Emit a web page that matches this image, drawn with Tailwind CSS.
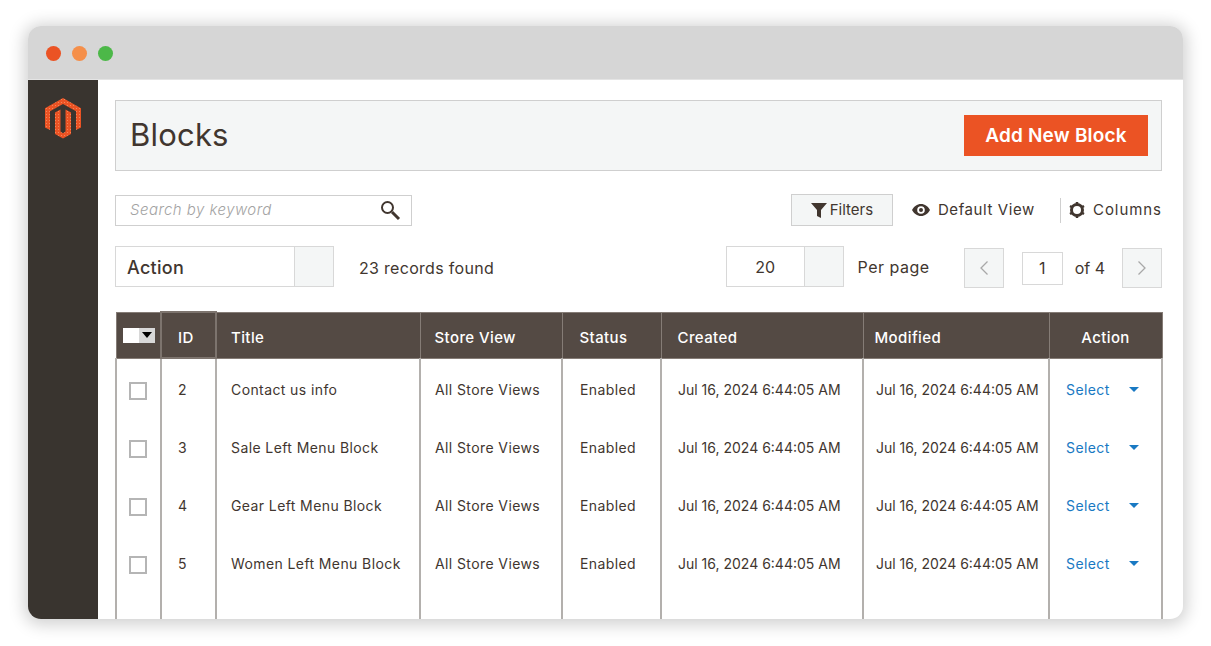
<!DOCTYPE html>
<html lang="en">
<head>
    <meta charset="UTF-8">
    <title>Blocks</title>
    <script src="https://cdn.jsdelivr.net/npm/@tailwindcss/browser@4"></script>
</head>
<body class="bg-white font-['Inter','Liberation_Sans',sans-serif] text-[#41362f]">
    <div class="w-[1211px] h-[646px] overflow-hidden pt-[26px] pl-[28px]">
        <div class="w-[1155px] h-[593px] rounded-[13px] overflow-hidden flex flex-col bg-white shadow-[0_2px_16px_4px_rgba(0,0,0,0.18)]">
            <div class="h-[54px] shrink-0 bg-[#d6d6d6] border-b border-[#e4e4e4] flex items-center gap-[11px] pl-[18px] pt-[1px]">
                <span class="w-[15px] h-[15px] rounded-full bg-[#eb5324]"></span>
                <span class="w-[15px] h-[15px] rounded-full bg-[#f58f4a]"></span>
                <span class="w-[15px] h-[15px] rounded-full bg-[#4cb848]"></span>
            </div>
            <div class="flex flex-1 min-h-0">
                <div class="w-[70px] shrink-0 bg-[#39342f] flex justify-center pt-[18px]">
                    <svg width="36" height="41" viewBox="0 0 36 41">
                        <defs><pattern id="dots" width="3" height="3" patternUnits="userSpaceOnUse"><rect width="3" height="3" fill="#eb5324"/><rect x="1" y="1" width="1" height="1" fill="#f2865a"/></pattern></defs>
                        <path fill="url(#dots)" d="M18 0 36 10.300V29.500l-5 2.500V13.300L18 6 5 13.300V32L0 29.500V10.300Z"/>
                        <path fill="url(#dots)" d="M10 14.500 15.500 11.500V33.500l2.500 1.800 2.500-1.800V11.500L26 14.500V36L18 40.500 10 36Z"/>
                    </svg>
                </div>
                <div class="flex-1 min-w-0 pl-[17px] pr-[21px] pt-[20px]">
                    <div class="h-[71px] bg-[#f4f6f6] border border-[#cfcfcf] flex items-center justify-between pl-[14px] pr-[13px]">
                        <h1 class="text-[31px] tracking-[0.2px] font-normal text-[#41362f]">Blocks</h1>
                        <button class="w-[184px] h-[41px] pt-[1px] bg-[#eb5324] text-white text-[19px] tracking-[0.2px] font-semibold">Add New Block</button>
                    </div>

                    <div class="flex items-center justify-between mt-[23px] h-[32px]">
                        <div class="w-[297px] h-[31px] border border-[#cfcfcf] flex items-center justify-between pl-[14px] pr-[10px]">
                            <span class="pt-[1px] text-[15px] tracking-[0.45px] italic font-light text-[#a3a3a3]">Search by keyword</span>
                            <svg width="22" height="22" viewBox="0 0 22 22" fill="none" stroke="#41362f"><circle cx="8.500" cy="8.500" r="5.500" stroke-width="2"/><path d="m13 13 7 7" stroke-width="3"/></svg>
                        </div>
                        <div class="flex items-center">
                            <button class="w-[102px] h-[32px] bg-[#f4f6f6] border border-[#cfcfcf] flex items-center justify-center gap-[3px] text-[15px]">
                                <svg width="16" height="16" viewBox="0 0 16 16"><path fill="#41362f" d="M0 1h16L10 8v8l-4-2V8Z"/></svg>
                                Filters
                            </button>
                            <svg class="ml-[19px]" width="18" height="12" viewBox="0 0 18 12"><path fill="#41362f" fill-rule="evenodd" d="M9 0c4 0 7 2.500 9 6-2 3.500-5 6-9 6S2 9.500 0 6c2-3.500 5-6 9-6Zm0 2.200a3.800 3.800 0 1 0 0 7.600 3.800 3.800 0 0 0 0-7.600Z"/><circle cx="9" cy="6" r="2" fill="#41362f"/></svg>
                            <span class="ml-[8px] text-[15px] tracking-[0.6px]">Default View</span>
                            <span class="ml-[25px] w-px h-[25px] bg-[#cfcfcf]"></span>
                            <svg class="ml-[8px]" width="16" height="16" viewBox="0 0 16 16" fill="none"><circle cx="8" cy="8" r="5.500" stroke="#41362f" stroke-width="3"/><path stroke="#41362f" stroke-width="2.500" d="M8 0v2M8 14v2M1 4l1.800 1M13.200 11 15 12M1 12l1.800-1M13.200 5 15 4"/></svg>
                            <span class="ml-[8px] pt-[1px] text-[15px] tracking-[0.95px]">Columns</span>
                        </div>
                    </div>

                    <div class="flex items-center mt-[20px] h-[41px]">
                        <div class="w-[219px] h-[41px] border border-[#d8d8d8] flex">
                            <span class="flex-1 flex items-center pl-[11px] pt-[2px] text-[18px] tracking-[0.3px] font-medium">Action</span>
                            <span class="w-[39px] bg-[#f4f6f6] border-l border-[#d8d8d8]"></span>
                        </div>
                        <span class="ml-[25px] mt-[2px] text-[16px] tracking-[0.3px]">23 records found</span>
                        <div class="ml-auto w-[118px] h-[41px] border border-[#d8d8d8] flex">
                            <span class="flex-1 flex items-center justify-center text-[16px]">20</span>
                            <span class="w-[39px] bg-[#f4f6f6] border-l border-[#d8d8d8]"></span>
                        </div>
                        <span class="ml-[14px] text-[16px] tracking-[0.5px]">Per page</span>
                        <button class="ml-[34px] mt-[3px] w-[40px] h-[40px] bg-[#f4f6f6] border border-[#d8d8d8] flex items-center justify-center">
                            <svg width="10" height="16" viewBox="0 0 10 16" fill="none" stroke="#a8a8a8" stroke-width="1.300"><path d="M8.500 1.500 2 8l6.500 6.500"/></svg>
                        </button>
                        <span class="ml-[18px] mt-[3px] w-[41px] h-[33px] border border-[#d8d8d8] flex items-center justify-center text-[16px]">1</span>
                        <span class="ml-[12px] mt-[3px] text-[16px]">of 4</span>
                        <button class="ml-[17px] mt-[3px] w-[40px] h-[40px] bg-[#f4f6f6] border border-[#d8d8d8] flex items-center justify-center">
                            <svg width="10" height="16" viewBox="0 0 10 16" fill="none" stroke="#a8a8a8" stroke-width="1.300"><path d="M1.500 1.500 8 8l-6.500 6.500"/></svg>
                        </button>
                    </div>

                    <table class="mt-[24px] w-[1046px] table-fixed border-collapse text-[14px] tracking-[0.4px]">
                        <colgroup>
                            <col class="w-[45px]"><col class="w-[55px]"><col class="w-[204px]"><col class="w-[142px]"><col class="w-[99px]"><col class="w-[202px]"><col class="w-[186px]"><col class="w-[113px]">
                        </colgroup>
                        <thead>
                            <tr class="h-[46px] bg-[#544a44] text-white text-[15px] text-left">
                                <th class="border border-[#857c76] font-medium pl-[6px]">
                                    <span class="flex w-[32px] h-[15px]"><span class="w-[16px] bg-white"></span><span class="w-[16px] bg-[#d8d8d8] flex items-center justify-center"><span class="border-x-[5px] border-t-[6px] border-x-transparent border-t-black"></span></span></span>
                                </th>
                                <th class="border-2 border-[#7d746e] font-medium pl-[16px] pt-[6px]">ID</th>
                                <th class="border border-[#857c76] font-medium pl-[14px] pt-[6px]">Title</th>
                                <th class="border border-[#857c76] font-medium pl-[14px] pt-[6px]">Store View</th>
                                <th class="border border-[#857c76] font-medium pl-[17px] pt-[6px]">Status</th>
                                <th class="border border-[#857c76] font-medium pl-[16px] pt-[6px]">Created</th>
                                <th class="border border-[#857c76] font-medium pl-[11px] pt-[6px]">Modified</th>
                                <th class="border border-[#857c76] font-medium text-center pt-[6px]">Action</th>
                            </tr>
                        </thead>
                        <tbody class="[&_td]:pt-[4px]">
                            <tr class="h-[58px]">
                                <td class="border-x-2 border-[#b3b0ad] pl-[12px]"><span class="block mt-[4px] w-[18px] h-[18px] border-2 border-[#b5b5b5]"></span></td>
                                <td class="border-x-2 border-[#b3b0ad] pl-[16px]">2</td>
                                <td class="border-x-2 border-[#b3b0ad] pl-[14px]">Contact us info</td>
                                <td class="border-x-2 border-[#b3b0ad] pl-[14px]">All Store Views</td>
                                <td class="border-x-2 border-[#b3b0ad] pl-[17px]">Enabled</td>
                                <td class="border-x-2 border-[#b3b0ad] pl-[16px] tracking-normal">Jul 16, 2024 6:44:05 AM</td>
                                <td class="border-x-2 border-[#b3b0ad] pl-[12px] tracking-normal">Jul 16, 2024 6:44:05 AM</td>
                                <td class="border-x-2 border-[#b3b0ad] pl-[16px]"><span class="flex items-center justify-between w-[73px] text-[#1979c3]">Select<span class="border-x-[5px] border-t-[5px] border-x-transparent border-t-[#1979c3]"></span></span></td>
                            </tr>
                            <tr class="h-[58px]">
                                <td class="border-x-2 border-[#b3b0ad] pl-[12px]"><span class="block mt-[4px] w-[18px] h-[18px] border-2 border-[#b5b5b5]"></span></td>
                                <td class="border-x-2 border-[#b3b0ad] pl-[16px]">3</td>
                                <td class="border-x-2 border-[#b3b0ad] pl-[14px]">Sale Left Menu Block</td>
                                <td class="border-x-2 border-[#b3b0ad] pl-[14px]">All Store Views</td>
                                <td class="border-x-2 border-[#b3b0ad] pl-[17px]">Enabled</td>
                                <td class="border-x-2 border-[#b3b0ad] pl-[16px] tracking-normal">Jul 16, 2024 6:44:05 AM</td>
                                <td class="border-x-2 border-[#b3b0ad] pl-[12px] tracking-normal">Jul 16, 2024 6:44:05 AM</td>
                                <td class="border-x-2 border-[#b3b0ad] pl-[16px]"><span class="flex items-center justify-between w-[73px] text-[#1979c3]">Select<span class="border-x-[5px] border-t-[5px] border-x-transparent border-t-[#1979c3]"></span></span></td>
                            </tr>
                            <tr class="h-[58px]">
                                <td class="border-x-2 border-[#b3b0ad] pl-[12px]"><span class="block mt-[4px] w-[18px] h-[18px] border-2 border-[#b5b5b5]"></span></td>
                                <td class="border-x-2 border-[#b3b0ad] pl-[16px]">4</td>
                                <td class="border-x-2 border-[#b3b0ad] pl-[14px]">Gear Left Menu Block</td>
                                <td class="border-x-2 border-[#b3b0ad] pl-[14px]">All Store Views</td>
                                <td class="border-x-2 border-[#b3b0ad] pl-[17px]">Enabled</td>
                                <td class="border-x-2 border-[#b3b0ad] pl-[16px] tracking-normal">Jul 16, 2024 6:44:05 AM</td>
                                <td class="border-x-2 border-[#b3b0ad] pl-[12px] tracking-normal">Jul 16, 2024 6:44:05 AM</td>
                                <td class="border-x-2 border-[#b3b0ad] pl-[16px]"><span class="flex items-center justify-between w-[73px] text-[#1979c3]">Select<span class="border-x-[5px] border-t-[5px] border-x-transparent border-t-[#1979c3]"></span></span></td>
                            </tr>
                            <tr class="h-[58px]">
                                <td class="border-x-2 border-[#b3b0ad] pl-[12px]"><span class="block mt-[4px] w-[18px] h-[18px] border-2 border-[#b5b5b5]"></span></td>
                                <td class="border-x-2 border-[#b3b0ad] pl-[16px]">5</td>
                                <td class="border-x-2 border-[#b3b0ad] pl-[14px]">Women Left Menu Block</td>
                                <td class="border-x-2 border-[#b3b0ad] pl-[14px]">All Store Views</td>
                                <td class="border-x-2 border-[#b3b0ad] pl-[17px]">Enabled</td>
                                <td class="border-x-2 border-[#b3b0ad] pl-[16px] tracking-normal">Jul 16, 2024 6:44:05 AM</td>
                                <td class="border-x-2 border-[#b3b0ad] pl-[12px] tracking-normal">Jul 16, 2024 6:44:05 AM</td>
                                <td class="border-x-2 border-[#b3b0ad] pl-[16px]"><span class="flex items-center justify-between w-[73px] text-[#1979c3]">Select<span class="border-x-[5px] border-t-[5px] border-x-transparent border-t-[#1979c3]"></span></span></td>
                            </tr>
                            <tr class="h-[58px]">
                                <td class="border-x-2 border-[#b3b0ad]"></td><td class="border-x-2 border-[#b3b0ad]"></td><td class="border-x-2 border-[#b3b0ad]"></td><td class="border-x-2 border-[#b3b0ad]"></td><td class="border-x-2 border-[#b3b0ad]"></td><td class="border-x-2 border-[#b3b0ad]"></td><td class="border-x-2 border-[#b3b0ad]"></td><td class="border-x-2 border-[#b3b0ad]"></td>
                            </tr>
                        </tbody>
                    </table>
                </div>
            </div>
        </div>
    </div>
</body>
</html>
